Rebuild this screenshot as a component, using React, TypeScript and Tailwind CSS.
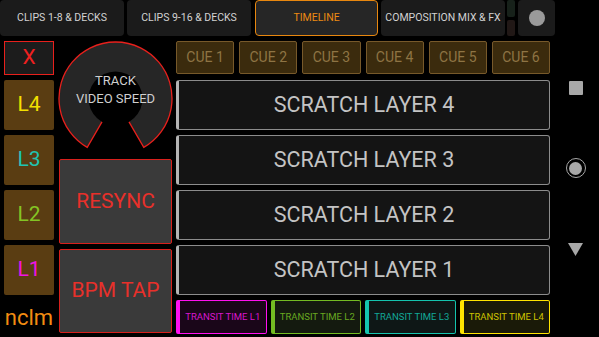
import React from "react";

const TABS = [
  { label: "CLIPS 1-8 & DECKS", w: "w-[124px]" },
  { label: "CLIPS 9-16 & DECKS", w: "w-[124px]" },
];

const LAYERS = [
  { label: "L4", color: "text-[#f2e000]" },
  { label: "L3", color: "text-[#1fc4b2]" },
  { label: "L2", color: "text-[#84c424]" },
  { label: "L1", color: "text-[#f014e4]" },
];

const TRANSIT = [
  { label: "TRANSIT TIME L1", cls: "bg-[#1a0619] border-[#ff10f0] text-[#d816cc]" },
  { label: "TRANSIT TIME L2", cls: "bg-[#141a0f] border-[#74bc22] text-[#68a820]" },
  { label: "TRANSIT TIME L3", cls: "bg-[#0e1716] border-[#14c4ae] text-[#12a898]" },
  { label: "TRANSIT TIME L4", cls: "bg-[#1a1a08] border-[#ffe400] text-[#cdc200]" },
];

// knob ring with a 60° gap at the bottom
function Knob() {
  const c = 57.5;
  const R = 56.5;
  const r = 27;
  const s = Math.sin(Math.PI / 6);
  const k = Math.cos(Math.PI / 6);
  const oL = [c - R * s, c + R * k];
  const oR = [c + R * s, c + R * k];
  const iL = [c - r * s, c + r * k];
  const iR = [c + r * s, c + r * k];
  const fill = `M${iL[0]} ${iL[1]} L${oL[0]} ${oL[1]} A${R} ${R} 0 1 1 ${oR[0]} ${oR[1]} L${iR[0]} ${iR[1]} A${r} ${r} 0 1 0 ${iL[0]} ${iL[1]} Z`;
  const edge = `M${iL[0]} ${iL[1]} L${oL[0]} ${oL[1]} A${R} ${R} 0 1 1 ${oR[0]} ${oR[1]} L${iR[0]} ${iR[1]}`;
  return (
    <div className="relative h-[115px] w-[115px]">
      <svg width="115" height="115" viewBox="0 0 115 115" className="absolute inset-0">
        <path d={fill} fill="#262626" />
        <path d={edge} fill="none" stroke="#e8201c" strokeWidth="1.3" />
      </svg>
      <div className="absolute left-0 right-0 top-[31px] text-center text-[13px] leading-[18px] text-[#cfcfcf]">
        TRACK
        <br />
        VIDEO SPEED
      </div>
    </div>
  );
}

export default function App() {
  return (
    <div
      className="relative h-[337px] w-[599px] overflow-hidden bg-black"
      style={{ fontFamily: "Roboto, 'Liberation Sans', sans-serif" }}
    >
      {/* tabs */}
      <div className="flex h-[36px] items-stretch">
        {TABS.map((t, i) => (
          <div
            key={t.label}
            className={`${t.w} ${i === 0 ? "ml-0" : "ml-[3px]"} flex items-center justify-center rounded-[4px] bg-[#1b1b1b] text-[10.5px] text-[#d2d2d2]`}
          >
            {t.label}
          </div>
        ))}
        <div className="ml-[4px] flex w-[123px] items-center justify-center rounded-[4px] border border-[#e8870f] bg-[#262626] text-[10.5px] text-[#ec8a12]">
          TIMELINE
        </div>
        <div className="ml-[3px] flex w-[124px] items-center justify-center rounded-[4px] bg-[#1b1b1b] text-[10.5px] text-[#d2d2d2]">
          COMPOSITION MIX &amp; FX
        </div>
        <div className="ml-[2px] flex w-[8px] flex-col gap-[3px]">
          <div className="h-[17px] rounded-[2px] bg-[#17211a]" />
          <div className="h-[16px] rounded-[2px] bg-[#211816]" />
        </div>
        <div className="ml-[3px] flex w-[37px] items-center justify-center rounded-[4px] bg-[#1b1b1b]">
          <div className="h-[16px] w-[16px] rounded-full bg-[#9a9a9a]" />
        </div>
      </div>

      <div className="mt-[5px] flex">
        {/* layer selectors */}
        <div className="ml-[4px] flex w-[50px] flex-col gap-[5px]">
          <div className="flex h-[34px] items-center justify-center border border-[#e8201c] bg-[#1c1c1c] text-[21px] text-[#ee2020]">
            X
          </div>
          {LAYERS.map((l) => (
            <div
              key={l.label}
              className={`flex h-[50px] items-center justify-center rounded-[2px] bg-[#5a3d12] text-[21px] ${l.color}`}
            >
              {l.label}
            </div>
          ))}
          <div className="flex h-[34px] items-center justify-center text-[22px] text-[#f28c12]">
            nclm
          </div>
        </div>

        {/* knob + resync */}
        <div className="ml-[5px] flex w-[113px] flex-col items-center">
          <div className="-mx-[1px] flex h-[113px] items-center justify-center pt-[2px]">
            <Knob />
          </div>
          <div className="mt-[5px] flex h-[85px] w-full items-center justify-center rounded-[2px] border border-[#d8201c] bg-[#3a3a3a] text-[21px] text-[#e8302a]">
            RESYNC
          </div>
          <div className="mt-[5px] flex h-[84px] w-full items-center justify-center rounded-[2px] border border-[#d8201c] bg-[#3a3a3a] text-[21px] text-[#e8302a]">
            BPM TAP
          </div>
        </div>

        {/* main */}
        <div className="ml-[4px] flex w-[374px] flex-col">
          <div className="flex h-[33px] gap-[5px]">
            {[1, 2, 3, 4, 5, 6].map((n) => (
              <div
                key={n}
                className="flex flex-1 items-center justify-center rounded-[2px] border border-[#77592a] bg-[#3b2b0d] text-[14px] text-[#8e7444]"
              >
                CUE {n}
              </div>
            ))}
          </div>
          <div className="mt-[6px] flex flex-col gap-[5px]">
            {[4, 3, 2, 1].map((n) => (
              <div
                key={n}
                className="flex h-[50px] items-center justify-center rounded-[3px] border border-l-[3px] border-[#8c8c8c] border-l-[#b4b4b4] bg-[#141414] text-[21.5px] text-[#c4c4c4]"
              >
                SCRATCH LAYER {n}
              </div>
            ))}
          </div>
          <div className="mt-[5px] flex h-[34px] gap-[4px]">
            {TRANSIT.map((t) => (
              <div
                key={t.label}
                className={`flex flex-1 items-center justify-center rounded-[2px] border border-l-[4px] text-[9.5px] ${t.cls}`}
              >
                {t.label}
              </div>
            ))}
          </div>
        </div>

        {/* system nav */}
        <div className="flex flex-1 flex-col items-center pl-[2px]">
          <div className="mt-[40px] h-[14px] w-[14px] rounded-[1px] bg-[#a8a8a8]" />
          <div className="mt-[63px] flex h-[20px] w-[20px] items-center justify-center rounded-full border-[1.5px] border-[#a8a8a8]">
            <div className="h-[13px] w-[13px] rounded-full bg-[#a8a8a8]" />
          </div>
          <svg width="15" height="13" viewBox="0 0 15 13" className="mt-[65px]">
            <path d="M0 0 H15 L7.5 13 Z" fill="#a8a8a8" />
          </svg>
        </div>
      </div>
    </div>
  );
}
